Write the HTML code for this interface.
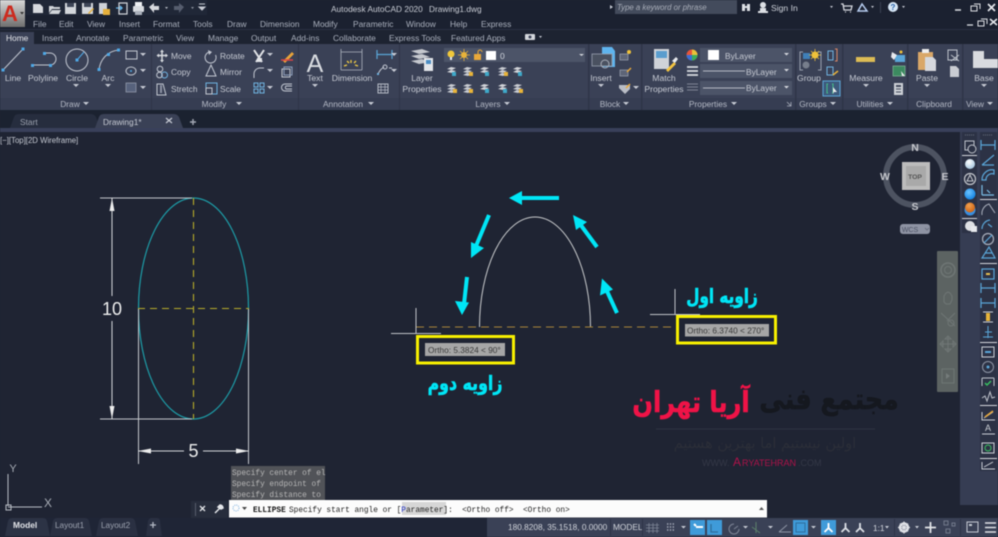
<!DOCTYPE html>
<html lang="en">
<head>
<meta charset="utf-8">
<title>AutoCAD ellipse arc</title>
<style>
html,body{margin:0;padding:0;width:998px;height:537px;overflow:hidden;background:#1f2433}
svg{display:block;filter:blur(.4px)}
text{font-family:"Liberation Sans",sans-serif}
.t{font-size:8.4px;fill:#c6cad3}
.d{font-size:8.4px;fill:#aab0bd}
.c{font-size:8.6px;fill:#c6cad3;text-anchor:middle}
.h{font-size:8.4px;fill:#b4b9c5;text-anchor:middle}
.m{font-family:"Liberation Mono",monospace;font-size:7.8px}
.fa{font-family:"DejaVu Sans",sans-serif;font-weight:bold;text-anchor:middle;direction:rtl}
.ic{fill:none;stroke:#c3c8d2;stroke-width:1}
.bl{fill:none;stroke:#6fb2e0;stroke-width:1}
.tb{fill:none;stroke:#5aa6d8;stroke-width:1.2}
</style>
</head>
<body>
<svg width="998" height="537" viewBox="0 0 998 537" xmlns="http://www.w3.org/2000/svg">
<defs>
<linearGradient id="app" x1="0" y1="0" x2="0" y2="1"><stop offset="0" stop-color="#d8d8d8"/><stop offset="1" stop-color="#6f6f6f"/></linearGradient>
<radialGradient id="sb" cx=".4" cy=".35" r=".7"><stop offset="0" stop-color="#6cc4ff"/><stop offset="1" stop-color="#0f7fe0"/></radialGradient>
<radialGradient id="so" cx=".4" cy=".3" r=".7"><stop offset="0" stop-color="#f0a050"/><stop offset="1" stop-color="#cf6414"/></radialGradient>
<radialGradient id="sw" cx=".4" cy=".3" r=".7"><stop offset="0" stop-color="#fff"/><stop offset="1" stop-color="#a8c8e0"/></radialGradient>
<g id="lay"><path d="M-5 -2l4-2 5 1-4 2zM-5 1l4-2 5 1-4 2zM-5 4l4-2 5 1-4 2z" fill="#c9ccd2"/><rect x="1" y="1" width="4" height="4" fill="#e8b43a"/></g>
<g id="lay2"><path d="M-5 -2l4-2 5 1-4 2zM-5 1l4-2 5 1-4 2z" fill="#d3d5da"/><rect x="0" y="1" width="4" height="4" fill="#3fa9c9"/></g>
<g id="arw"><path d="M-3 -1 h6 l-3 3z" fill="#c6cad3"/></g>
<g id="tic"><rect x="-6" y="-5" width="12" height="10" class="tb"/><path d="M-2 0h4" stroke="#e8c050" stroke-width="2"/></g>
<g id="tic2"><path d="M-7 -5v10M7 -5v10M-7 0H7" class="tb"/></g>
<g id="tic3"><path d="M-6 5L6 -5M-6 5h12" class="tb"/></g>
</defs>

<!-- canvas -->
<rect width="998" height="537" fill="#1f2433"/>

<!-- title bar -->
<rect width="998" height="30" fill="#1b2130"/>
<rect x="26" y="0" width="181" height="15" fill="#202737"/>
<rect x="0" y="29" width="998" height="1" fill="#2a3142"/>
<rect width="25" height="27" fill="url(#app)"/>
<text x="2" y="21" style="font-size:22px;font-weight:bold;fill:#cc2a1e">A</text>
<path d="M20 12h4l-2 2.500z" fill="#333"/>

<!-- QAT icons -->
<path d="M33 4h7l3 3v6H33z" fill="#d7dade"/>
<path d="M49 6h4l1 1h6v2H52l-3 4zM52 10h9l-2 4H49z" fill="#d1d4d9"/>
<rect x="65" y="3" width="11" height="11" fill="#d3d6db"/><rect x="67" y="3" width="7" height="4" fill="#3d4557"/>
<rect x="82" y="3" width="11" height="11" fill="#d3d6db"/><rect x="84" y="3" width="7" height="4" fill="#3d4557"/><path d="M88 13l5-5 1 1-5 5z" fill="#e5b03d"/>
<rect x="99" y="3" width="8" height="11" fill="#cfd2d7"/><rect x="103" y="9" width="7" height="6" fill="#e5b03d"/>
<path d="M116 8h6M120 6l2 2-2 2" stroke="#62b5ea" stroke-width="1.300" fill="none"/><rect x="119" y="3" width="8" height="11" fill="none" stroke="#d3d6db" stroke-width="1.200"/>
<rect x="133" y="6" width="11" height="6" rx="1" fill="#d8dbe0"/><rect x="135" y="2" width="7" height="4" fill="#eef0f3"/><rect x="135" y="11" width="7" height="4" fill="#aab0bb"/>
<path d="M149 7l5-4v3h5v4h-5v3z" fill="#d6d8dd"/><path d="M165 7h3l-1.500 2z" fill="#b8bcc5"/>
<path d="M184 7l-5-4v3h-5v4h5v3z" fill="#565d6e"/><path d="M191 7h3l-1.500 2z" fill="#8d93a0"/>
<path d="M199 4h6M199 7h6l-3 3z" stroke="#c6cad3" stroke-width="1" fill="#c6cad3"/>

<text x="331" y="12" style="font-size:8.300px;fill:#c8ccd4">Autodesk AutoCAD 2020</text>
<text x="429" y="12" style="font-size:8.300px;fill:#c8ccd4">Drawing1.dwg</text>
<path d="M610 5l3 2-3 2z" fill="#c6cad3"/>
<rect x="615" y="0" width="122" height="14" fill="#434b5c"/>
<text x="617" y="10" style="font-size:7.800px;font-style:italic;fill:#a9aeb9">Type a keyword or phrase</text>
<path d="M742 4h3v7h-3zM747 4h3v7h-3zM745 6h2v2h-2z" fill="#dcdfe4"/>
<circle cx="763" cy="5" r="3" fill="#dcdfe4"/><path d="M758 11h10v2h-10zM760 8h6v3h-6z" fill="#dcdfe4"/>
<text x="771" y="11" style="font-size:8.600px;fill:#ced2da">Sign In</text>
<path d="M830 6h3l-1.500 2z" fill="#c6cad3"/>
<path d="M841 4h2l1 6h7l1-4h-9M845 12h1M850 12h1" stroke="#d5d8de" stroke-width="1.300" fill="none"/>
<path d="M862 4l-4 7h9z" fill="none" stroke="#b7cdf0" stroke-width="1.500"/><path d="M871 6h3l-1.500 2z" fill="#c6cad3"/>
<rect x="880" y="2" width="1" height="11" fill="#3a4152"/>
<circle cx="893" cy="7" r="5" fill="#d6e6f5"/><text x="893" y="10" style="font-size:8px;font-weight:bold;fill:#2560a8;text-anchor:middle">?</text>
<path d="M902 6h3l-1.500 2z" fill="#c6cad3"/>
<path d="M955 10h6" stroke="#dcdfe4" stroke-width="1.500"/>
<path d="M971 6h6v5h-6zM974 4h6v5" fill="none" stroke="#dcdfe4" stroke-width="1"/>
<path d="M988 4l7 7M995 4l-7 7" stroke="#e8eaee" stroke-width="1.600"/>
<path d="M967 25h6" stroke="#dcdfe4" stroke-width="1.300"/>
<path d="M978 21h6v5h-6zM981 19h6v5" fill="none" stroke="#dcdfe4" stroke-width="1"/>
<path d="M990 19l7 6M997 19l-7 6" stroke="#e8eaee" stroke-width="1.500"/>

<!-- menu bar -->
<text class="d" x="33" y="27">File</text><text class="d" x="59" y="27">Edit</text><text class="d" x="87" y="27">View</text>
<text class="d" x="119" y="27">Insert</text><text class="d" x="153" y="27">Format</text><text class="d" x="193" y="27">Tools</text>
<text class="d" x="227" y="27">Draw</text><text class="d" x="260" y="27">Dimension</text><text class="d" x="313" y="27">Modify</text>
<text class="d" x="353" y="27">Parametric</text><text class="d" x="406" y="27">Window</text><text class="d" x="450" y="27">Help</text><text class="d" x="481" y="27">Express</text>

<!-- ribbon tabs -->
<rect x="0" y="30" width="998" height="14" fill="#1d2331"/>
<rect x="0" y="32" width="34" height="12" fill="#3a4156"/>
<text x="6" y="41" style="font-size:8.400px;fill:#e4e6ea">Home</text>
<text class="d" x="42" y="41">Insert</text><text class="d" x="76" y="41">Annotate</text><text class="d" x="123" y="41">Parametric</text>
<text class="d" x="176" y="41">View</text><text class="d" x="208" y="41">Manage</text><text class="d" x="251" y="41">Output</text>
<text class="d" x="291" y="41">Add-ins</text><text class="d" x="333" y="41">Collaborate</text><text class="d" x="389" y="41">Express Tools</text><text class="d" x="451" y="41">Featured Apps</text>
<rect x="525" y="34" width="10" height="6" rx="1" fill="#d3d6db"/><circle cx="530" cy="37" r="1.500" fill="#3a4156"/><path d="M539 36h3l-1.500 2z" fill="#c6cad3"/>

<!-- ribbon -->
<rect x="0" y="44" width="998" height="66" fill="#3a4156"/>
<rect x="0" y="98" width="998" height="12" fill="#363d52"/>
<g fill="#2f3548">
<rect x="151" y="44" width="1" height="66"/><rect x="298" y="44" width="1" height="66"/><rect x="399" y="44" width="1" height="66"/>
<rect x="588" y="44" width="1.500" height="66"/><rect x="641" y="44" width="1.500" height="66"/><rect x="795" y="44" width="1.500" height="66"/>
<rect x="842" y="44" width="1.500" height="66"/><rect x="907" y="44" width="1.500" height="66"/><rect x="962" y="44" width="1.500" height="66"/>
</g>

<!-- Draw panel -->
<path d="M3 70L23 49" class="ic"/><rect x="1.500" y="68.500" width="3" height="3" fill="#4ea8e6"/><rect x="21.500" y="47.500" width="3" height="3" fill="#4ea8e6"/>
<path d="M33 65h17a6 6 0 0 0 0-12h-4" class="ic"/><rect x="31" y="64" width="3" height="3" fill="#4ea8e6"/><rect x="43" y="52" width="3" height="3" fill="#4ea8e6"/><rect x="49" y="64" width="3" height="3" fill="#4ea8e6"/>
<circle cx="77" cy="60" r="11" class="ic"/><path d="M77 60l7-8" stroke="#4ea8e6" stroke-width="1"/><rect x="75.500" y="58.500" width="3" height="3" fill="#4ea8e6"/>
<path d="M99 70c1-10 8-19 20-20" class="ic"/><rect x="97.500" y="68" width="3" height="3" fill="#4ea8e6"/><rect x="107" y="53" width="3" height="3" fill="#4ea8e6"/><rect x="117" y="48.500" width="3" height="3" fill="#4ea8e6"/>
<rect x="126" y="51" width="11" height="8" class="ic"/><use href="#arw" x="143" y="54"/>
<ellipse cx="131" cy="71" rx="5" ry="4" class="ic"/><circle cx="131" cy="71" r="1" fill="#4ea8e6"/><use href="#arw" x="143" y="70"/>
<rect x="126" y="83" width="10" height="9" fill="#57627c" stroke="#9aa2b2" stroke-width=".7"/><use href="#arw" x="143" y="87"/>
<text class="c" x="13" y="81">Line</text><text class="c" x="43" y="81">Polyline</text><text class="c" x="77" y="81">Circle</text><text class="c" x="108" y="81">Arc</text>
<use href="#arw" x="76" y="85"/><use href="#arw" x="108" y="85"/>
<text class="h" x="70" y="107">Draw</text><use href="#arw" x="86" y="103"/>

<!-- Modify panel -->
<path d="M162 51v10M157.500 55.500h9" stroke="#d8dbe0" stroke-width="1.500"/><path d="M162 49.500l-2 2.500h4zM162 62.500l-2-2.500h4zM156.500 55.500l2.500-2v4zM168 55.500l-2.500-2v4z" fill="#d8dbe0"/>
<text class="t" x="171" y="59">Move</text>
<circle cx="160" cy="69" r="2.800" class="ic"/><circle cx="164.500" cy="75" r="3" class="ic" style="stroke:#6fb2e0"/><circle cx="159.500" cy="75" r="2.800" class="ic"/>
<text class="t" x="171" y="75">Copy</text>
<path d="M157 84h6l3 11h-9z" class="ic"/><rect x="160" y="85" width="2" height="8" fill="#8d94a5"/>
<text class="t" x="171" y="92">Stretch</text>
<path d="M210 52a5.500 5.500 0 1 0 5.500 3" class="ic"/><path d="M208 50l4 2-3 3z" fill="#c3c8d2"/>
<text class="t" x="220" y="59">Rotate</text>
<path d="M206 76l5-11 5 11z" class="ic"/>
<text class="t" x="220" y="75">Mirror</text>
<rect x="206" y="83" width="11" height="11" class="bl"/><rect x="206" y="88" width="6" height="6" class="ic"/>
<text class="t" x="220" y="92">Scale</text>
<path d="M254 50l8 12M264 50l-8 12" stroke="#e1e3e7" stroke-width="2"/><rect x="257" y="58" width="5" height="4" fill="#e1e3e7"/>
<use href="#arw" x="270" y="54"/>
<path d="M283 61l9-9 2 2-9 9z" fill="#e8a33a"/><path d="M281 60h12" stroke="#d44" stroke-width="1.500"/>
<path d="M254 78v-4a6 6 0 0 1 6-6h4" class="ic"/><use href="#arw" x="270" y="70"/>
<rect x="282" y="69" width="8" height="8" class="ic"/><rect x="284" y="67" width="8" height="8" class="ic" style="stroke:#8fa0bb"/>
<rect x="254" y="83" width="4" height="4" class="bl"/><rect x="260" y="83" width="4" height="4" class="bl"/><rect x="254" y="89" width="4" height="4" class="bl"/><rect x="260" y="89" width="4" height="4" class="bl"/><use href="#arw" x="270" y="87"/>
<path d="M292 84h-7a3 3 0 0 0 0 7h7M292 86h-6a2 2 0 0 0 0 3h6" class="ic"/>
<text class="h" x="214" y="107">Modify</text><use href="#arw" x="239" y="103"/>

<!-- Annotation -->
<text x="315" y="72" style="font-size:25px;fill:#d8dbe0;text-anchor:middle">A</text>
<text class="c" x="315" y="81">Text</text><use href="#arw" x="315" y="85"/>
<path d="M341 49v21M362 49v21M341 52h21M341 70h21" stroke="#aeb4c0" stroke-width=".8" fill="none"/>
<path d="M344 66l3-1M351 60v3M358 66l-3-1M347 61l2 2M356 61l-2 2" stroke="#f0cb45" stroke-width="1.300"/>
<text class="c" x="352" y="81">Dimension</text>
<path d="M377 50v9M392 50v9M377 54.500h15" class="tb"/><use href="#arw" x="394" y="54"/>
<path d="M378 74c2-4 3-5 6-7" class="ic"/><circle cx="385" cy="67" r="2" class="ic"/><rect x="377" y="73" width="2" height="2" fill="#6fb2e0"/><path d="M389 68h3" stroke="#c3c8d2"/><use href="#arw" x="394" y="70"/>
<rect x="378" y="84" width="10" height="9" fill="none" stroke="#b6bbc6"/><path d="M378 87h10M378 90h10M381 84v9M385 84v9" stroke="#b6bbc6" stroke-width=".7"/>
<text class="h" x="343" y="107">Annotation</text><use href="#arw" x="371" y="103"/>

<!-- Layers -->
<path d="M411 51l11-2 8 3-11 2zM411 56l11-2 8 3-11 2zM411 61l11-2 8 3-11 2z" fill="#c5c8ce"/>
<rect x="424" y="58" width="9" height="13" fill="#e4e6ea"/><rect x="426" y="60" width="5" height="4" fill="#4d8ec4"/>
<text class="c" x="422" y="81">Layer</text><text class="c" x="422" y="92">Properties</text>
<rect x="444" y="48" width="141" height="14" fill="#4c5468"/>
<circle cx="451" cy="54" r="3.500" fill="#f1c83a"/><rect x="450" y="57" width="2" height="3" fill="#e8eaee"/>
<circle cx="464" cy="55" r="3" fill="#e8b33a"/><path d="M464 49v12M458 55h12M460 51l8 8M468 51l-8 8" stroke="#e8b33a" stroke-width=".8"/>
<rect x="474" y="54" width="7" height="6" fill="#e8a83a"/><path d="M478 54v-2a2 2 0 0 1 4 0" stroke="#e8a83a" fill="none"/>
<rect x="486" y="51" width="10" height="9" fill="#fff"/>
<text x="500" y="59" style="font-size:8.500px;fill:#d0d4dc">0</text><path d="M579 54h5l-2.500 2z" fill="#d5d8de"/>
<use href="#lay2" x="452" y="71"/><use href="#lay" x="468" y="71"/><use href="#lay2" x="485" y="71"/><use href="#lay" x="503" y="71"/><use href="#lay2" x="518" y="71"/>
<use href="#lay" x="452" y="88"/><use href="#lay" x="468" y="88"/><use href="#lay2" x="485" y="88"/><use href="#lay2" x="503" y="88"/><use href="#lay" x="518" y="88"/>
<text class="h" x="488" y="107">Layers</text><use href="#arw" x="507" y="103"/>

<!-- Block -->
<path d="M602 47h10l3 4v16h-13z" fill="#5fb4ee"/><rect x="592" y="54" width="20" height="12" fill="#4a5160" stroke="#98a0ae" stroke-width=".8"/><circle cx="605" cy="64" r="4" fill="none" stroke="#a8aeb9"/>
<text class="c" x="601" y="81">Insert</text><use href="#arw" x="601" y="85"/>
<rect x="620" y="54" width="8" height="6" fill="#5d6477" stroke="#aab0bd" stroke-width=".6"/><circle cx="629" cy="52" r="2" fill="#f0c23a"/>
<rect x="620" y="70" width="8" height="6" fill="#5d6477" stroke="#aab0bd" stroke-width=".6"/><path d="M627 72l4-4" stroke="#e8a83a" stroke-width="1.500"/>
<path d="M619 85h11v4l-5 5-6-6z" fill="#b9bdc6"/><path d="M626 88l4-4" stroke="#e8a83a" stroke-width="1.500"/><use href="#arw" x="636" y="87"/>
<text class="h" x="610" y="107">Block</text><use href="#arw" x="626" y="103"/>

<!-- Properties -->
<rect x="654" y="49" width="15" height="20" fill="#d0d3d8"/><rect x="656" y="51" width="11" height="7" fill="#5a9dce"/><path d="M666 70l8-8 2 2-8 8z" fill="#f2c340"/><path d="M672 61l4-4 2 2-3 4z" fill="#e8eaee"/>
<text class="c" x="664" y="81">Match</text><text class="c" x="664" y="92">Properties</text>
<circle cx="692" cy="55" r="5.500" fill="#e8553a"/><path d="M692 55V49.500a5.500 5.500 0 0 1 5.500 5.500z" fill="#e8c23a"/><path d="M692 55h5.500a5.500 5.500 0 0 1-5.500 5.500z" fill="#3aaf5a"/><path d="M692 55v5.500a5.500 5.500 0 0 1-5.500-5.500z" fill="#3a6fd8"/>
<path d="M687 67h11M687 71h11M687 75h11" stroke="#d8dbe0" stroke-width="1.800"/>
<path d="M687 84h11M687 87h11M687 90h11" stroke="#7f8595" stroke-width="1"/>
<rect x="700" y="48" width="92" height="14" fill="#4c5468"/><rect x="708" y="50" width="11" height="10" fill="#fff"/>
<text class="t" x="725" y="59">ByLayer</text><path d="M784 53h5l-2.500 2.500z" fill="#d5d8de"/>
<rect x="700" y="64" width="92" height="14" fill="#4c5468"/><path d="M703 71h42" stroke="#b4b9c4" stroke-width="1"/>
<text class="t" x="746" y="75">ByLayer</text><path d="M784 69h5l-2.500 2.500z" fill="#d5d8de"/>
<rect x="700" y="81" width="92" height="14" fill="#4c5468"/><path d="M703 88h42" stroke="#b4b9c4" stroke-width="1"/>
<text class="t" x="746" y="91">ByLayer</text><path d="M784 86h5l-2.500 2.500z" fill="#d5d8de"/>
<text class="h" x="708" y="107">Properties</text><use href="#arw" x="734" y="103"/>
<path d="M787 102l4 4M791 102v4h-4" stroke="#aab0bd" stroke-width=".8" fill="none"/>

<!-- Groups -->
<path d="M803 52h-3v18h3M818 52h3v18h-3" stroke="#9aa1af" fill="none"/><rect x="803" y="53" width="7" height="6" fill="#3f7fb8"/><circle cx="806" cy="65" r="3.500" fill="#777e8c"/>
<circle cx="815" cy="55" r="3.500" fill="#f0c23a"/><path d="M815 49v12M809 55h12M811 51l8 8M819 51l-8 8" stroke="#f0c23a" stroke-width=".8"/>
<text class="c" x="809" y="81">Group</text>
<rect x="828" y="51" width="5" height="9" fill="none" stroke="#6fb2e0"/><path d="M835 49h2v12h-2" stroke="#d86" fill="none"/>
<rect x="827" y="67" width="6" height="8" fill="none" stroke="#6fb2e0"/><path d="M833 75l5-4" stroke="#e8b33a" stroke-width="1.500"/>
<rect x="823" y="81" width="17" height="15" fill="#3d5a7c" stroke="#5aa6d8"/><path d="M828 84h-1v9h1M832 84h1v9h-1" stroke="#45c08a" fill="none"/><path d="M833 87l4 5-3 0-1 2z" fill="#eee"/>
<text class="h" x="813" y="107">Groups</text><use href="#arw" x="833" y="103"/>

<!-- Utilities -->
<rect x="856" y="57" width="19" height="5" fill="#dcbc55"/>
<text class="c" x="866" y="81">Measure</text><use href="#arw" x="866" y="85"/>
<rect x="895" y="55" width="10" height="7" fill="#5aa6d8"/><path d="M892 52l5 3-3 5-3-3z" fill="#e8eaee"/><circle cx="901" cy="52" r="1.500" fill="#f0c23a"/>
<rect x="893" y="66" width="12" height="10" fill="#3c8a60" stroke="#7fb898" stroke-width=".7"/><path d="M901 71l4 5-3 0z" fill="#eee"/>
<rect x="894" y="83" width="9" height="12" fill="#ccd0d6"/><rect x="896" y="85" width="5" height="2" fill="#444b5c"/><path d="M896 89h5M896 92h5" stroke="#444b5c"/>
<text class="h" x="870" y="107">Utilities</text><use href="#arw" x="890" y="103"/>

<!-- Clipboard -->
<rect x="918" y="52" width="15" height="18" fill="#d9a768"/><rect x="922" y="49" width="7" height="4" fill="#eee"/>
<path d="M925 57h8l3 3v11h-11z" fill="#d6d8dd"/>
<text class="c" x="927" y="81">Paste</text><use href="#arw" x="927" y="85"/>
<rect x="948" y="50" width="9" height="10" fill="none" stroke="#bfc4cd"/><path d="M951 55l8 6M959 55l-8 6" stroke="#bfc4cd"/>
<path d="M950 66h6l3 3v8h-9z" fill="#c9ccd2"/>
<text class="h" x="934" y="107">Clipboard</text>

<!-- View -->
<path d="M973 51h11v8h14v9H973z" fill="#d9dbdf"/>
<text class="c" x="984" y="81">Base</text><use href="#arw" x="984" y="85"/>
<text class="h" x="975" y="107">View</text><use href="#arw" x="990" y="103"/>

<!-- file tabs -->
<rect x="0" y="110" width="998" height="18" fill="#1b2230"/>
<path d="M10 128l4-11q1-3 5-3h72q3 0 5 3l4 11z" fill="#262d3e"/>
<path d="M95 128l4-11q1-3 5-3h70q3 0 5 3l4 11z" fill="#3a4156"/>
<text class="d" x="20" y="125" style="fill:#9da3b0">Start</text>
<text class="t" x="103" y="125">Drawing1*</text>
<path d="M166 118l6 5M172 118l-6 5" stroke="#c6cad3" stroke-width="1.200"/>
<path d="M193 119v6M190 122h6" stroke="#a4a9b5" stroke-width="1.400"/>
<rect x="0" y="128" width="998" height="4" fill="#39405a"/>

<!-- viewport label -->
<text x="0" y="143" style="font-size:7.800px;fill:#c6cad3">[−][Top][2D Wireframe]</text>

<!-- ellipse drawing -->
<ellipse cx="193.500" cy="308.500" rx="55" ry="110.500" fill="none" stroke="#1d9ba6" stroke-width="1.200"/>
<path d="M193.500 198V419" stroke="#b8ad2a" stroke-width="1.100" stroke-dasharray="7 5"/>
<path d="M138 308.500H249" stroke="#b8ad2a" stroke-width="1" stroke-dasharray="7 5"/>
<path d="M100 198h92M100 419h92" stroke="#c4c7cc" stroke-width="1"/>
<path d="M112 198v98M112 321v98" stroke="#d4d6da" stroke-width="1"/>
<path d="M112 198l-2.500 13h5zM112 419l-2.500-13h5z" fill="#eceded"/>
<text x="112" y="315" style="font-size:18px;fill:#eceded;text-anchor:middle">10</text>
<path d="M138.500 309v155M248.500 309v155" stroke="#c4c7cc" stroke-width="1"/>
<path d="M138 451h46M203 451h46" stroke="#d4d6da" stroke-width="1"/>
<path d="M138 451l13-2.500v5zM249 451l-13-2.500v5z" fill="#eceded"/>
<text x="193.500" y="457" style="font-size:18px;fill:#eceded;text-anchor:middle">5</text>

<!-- arc -->
<path d="M479.500 327A55.500 110 0 0 1 590.500 327" fill="none" stroke="#c8cacc" stroke-width="1"/>
<path d="M416 327H676" stroke="#a8853a" stroke-width="1" stroke-dasharray="8 5"/>
<path d="M416 308v26M391 333.500h50M675 289v26M650 314.500h50" stroke="#c0c3c8" stroke-width="1" fill="none"/>
<!-- cyan arrows -->
<g stroke="#00e6f6" stroke-width="4" fill="#00e6f6">
<path d="M559 198H518"/><path d="M509 198l13-7v14z" stroke="none"/>
<path d="M489 215L476 246"/><path d="M471 258l0-16 13 6z" stroke="none"/>
<path d="M467 277L464 304"/><path d="M462 315l-7-14 14 1.500z" stroke="none"/>
<path d="M597 247L580 224"/><path d="M573 215l14 7-11 8z" stroke="none"/>
<path d="M617 313L606 289"/><path d="M602 278.500l11 11-13 6z" stroke="none"/>
</g>
<!-- yellow boxes -->
<rect x="417.500" y="336.500" width="96" height="26.500" fill="none" stroke="#f8f000" stroke-width="3"/>
<rect x="425" y="343" width="80" height="13" fill="#a6a6a6"/>
<text x="428" y="353" style="font-size:8.300px;fill:#3a3a3a">Ortho: 5.3824 &lt; 90°</text>
<rect x="677.500" y="316.500" width="98" height="26.500" fill="none" stroke="#f8f000" stroke-width="3"/>
<rect x="685" y="324" width="84" height="12.500" fill="#a6a6a6"/>
<text x="687" y="333.500" style="font-size:8.300px;fill:#3a3a3a">Ortho: 6.3740 &lt; 270°</text>
<!-- farsi labels -->
<text class="fa" transform="translate(722 303) scale(.76 1)" style="font-size:20px;fill:#00e6f6;stroke:#00e6f6;stroke-width:.6px">زاویه اول</text>
<text class="fa" transform="translate(465 390) scale(.79 1)" style="font-size:20px;fill:#00e6f6;stroke:#00e6f6;stroke-width:.6px">زاویه دوم</text>

<!-- watermark -->
<text class="fa" transform="translate(829 409) scale(.87 1)" style="font-size:29px;fill:#15181f;stroke:#15181f;stroke-width:.6px">مجتمع فنی</text>
<text class="fa" transform="translate(691 412) scale(.83 1)" style="font-size:29px;fill:#ef1347;stroke:#ef1347;stroke-width:.6px">آریا تهران</text>
<rect x="656" y="428.500" width="219" height="1" fill="#2f3441"/>
<text class="fa" x="765" y="448" style="font-size:14.500px;font-weight:normal;fill:#2b2e38">اولین نیستیم اما بهترین هستیم</text>
<text x="702" y="466" style="font-size:9px;fill:#343847">WWW.</text>
<text x="733" y="466" style="font-size:12px;fill:#ad1249">A</text><text x="742" y="466" style="font-size:9px;fill:#ad1249">RYATEHRAN</text>
<text x="798" y="466" style="font-size:9px;fill:#343847">.COM</text>

<!-- right side toolbars -->
<rect x="960" y="132" width="38" height="373" fill="#363d53"/>
<rect x="962" y="132" width="15" height="101" fill="#2c3245"/>
<rect x="980" y="132" width="17" height="339" fill="#2c3245"/>
<path d="M965 135h10M983 135h10" stroke="#666d80" stroke-dasharray="1 1"/>
<rect x="965" y="141" width="9" height="9" fill="none" stroke="#c0c4cc"/><circle cx="972" cy="149" r="4" fill="#2c3245" stroke="#c0c4cc"/>
<rect x="962" y="155" width="15" height="1" fill="#d6d8dd"/>
<circle cx="970" cy="164" r="5" fill="url(#sw)"/>
<circle cx="970" cy="179" r="5.500" fill="none" stroke="#c4c7cd" stroke-width="1.200"/><path d="M970 175l-3 6h6z" fill="none" stroke="#c4c7cd"/>
<circle cx="970" cy="194" r="5.500" fill="url(#sb)"/>
<circle cx="970" cy="210" r="5.500" fill="#3a8fe0"/><circle cx="970" cy="207.500" r="5" fill="url(#so)"/>
<rect x="962" y="218" width="15" height="1" fill="#d6d8dd"/>
<circle cx="970" cy="226" r="5" fill="#dfe1e5"/><rect x="971" y="226" width="6" height="6" fill="#e8eaee"/>
<use href="#tic2" x="988" y="145"/><use href="#tic3" x="988" y="160"/>
<path d="M982 180a10 10 0 0 1 12-10v4a6 6 0 0 0-8 6z" class="tb"/>
<path d="M982 195h12M982 185v10M987 190l3 3" class="tb" style="stroke:#7bbfe8"/>
<rect x="980" y="199" width="17" height="1" fill="#d6d8dd"/>
<path d="M982 215a10 10 0 0 1 7-11l6 9" class="ic" style="stroke:#aab0bd"/>
<path d="M982 229a9 9 0 0 1 8-9M988 224l4 3" class="tb"/>
<circle cx="988" cy="239" r="5.500" class="tb" style="stroke:#aab0bd"/><path d="M984 243l8-8" class="tb"/>
<path d="M982 258h13l-6-11zM985 253h7" class="tb"/>
<rect x="980" y="263" width="17" height="1" fill="#d6d8dd"/>
<use href="#tic" x="988" y="274"/><use href="#tic2" x="988" y="288"/><use href="#tic2" x="988" y="303"/>
<path d="M983 312h10M983 322h10" stroke="#ccd0d6"/><rect x="986" y="313" width="4" height="8" fill="#e8b43a"/>
<path d="M988 326v12M983 337h10M985 332h7" stroke="#5aa6d8"/>
<rect x="980" y="342" width="17" height="1" fill="#d6d8dd"/>
<rect x="982" y="347" width="12" height="10" fill="#2c3245" stroke="#ccd0d6"/><path d="M985 352h6" stroke="#5aa6d8" stroke-width="2"/>
<circle cx="988" cy="367" r="5.500" fill="none" stroke="#8f96a6"/><circle cx="988" cy="367" r="1.500" fill="#5aa6d8"/>
<path d="M982 378h12M982 378v8M994 378v8" stroke="#c0c4cc" fill="none"/><path d="M985 383l2 2 4-4" stroke="#38c060" stroke-width="1.500" fill="none"/>
<path d="M982 398l3-2 2 5 3-9 2 6 3-1" stroke="#c0c4cc" fill="none"/>
<rect x="980" y="405" width="17" height="1" fill="#d6d8dd"/>
<path d="M982 412v8h13M984 418l9-6" stroke="#ccd0d6" fill="none"/><path d="M985 417l8-6" stroke="#e8a83a" stroke-width="1.500"/>
<text x="988" y="431" style="font-size:9px;fill:#ccd0d6;text-anchor:middle">A</text><path d="M982 434h13" stroke="#ccd0d6"/>
<rect x="982" y="443" width="12" height="10" fill="none" stroke="#ccd0d6"/><circle cx="988" cy="448" r="3" fill="none" stroke="#38c060"/>
<rect x="980" y="458" width="17" height="1" fill="#d6d8dd"/>
<path d="M982 462v7h13M984 467l9-5" stroke="#ccd0d6" fill="none"/>

<!-- view cube -->
<circle cx="915" cy="176" r="29" fill="none" stroke="#4d5361" stroke-width="6"/>
<rect x="902" y="162" width="28" height="28" fill="#bcbcbc"/>
<rect x="906" y="166" width="20" height="20" fill="#a9a9a9"/>
<text x="915" y="179" style="font-size:6.800px;font-weight:bold;fill:#555;text-anchor:middle">TOP</text>
<g style="font-size:10.500px;font-weight:bold;fill:#c6c8cd;text-anchor:middle">
<text x="915" y="151">N</text><text x="915" y="210">S</text><text x="885" y="180">W</text><text x="945" y="180">E</text>
</g>
<rect x="900" y="224" width="30" height="10" rx="3" fill="#8e93a3"/>
<text x="910" y="232" style="font-size:7px;fill:#4c5264;text-anchor:middle">WCS</text>
<path d="M925 228l2 2 2-2" stroke="#6d7282" fill="none"/>

<!-- nav bar -->
<rect x="937" y="251" width="21" height="141" rx="1" fill="#5c6362"/>
<circle cx="948" cy="270" r="7" fill="none" stroke="#6f7675" stroke-width="1.500"/><circle cx="948" cy="270" r="3.500" fill="none" stroke="#6f7675"/>
<path d="M944 302v-6l2-3 2-1 2 1 2 3v4l-2 4h-4z" fill="none" stroke="#6f7675"/>
<path d="M941 313l14 13M955 313l-8 8" stroke="#6f7675" fill="none"/><circle cx="951" cy="323" r="3" fill="none" stroke="#6f7675"/>
<path d="M948 336v16M940 344h16M948 336l-3 3h6zM940 344l3-3v6zM956 344l-3-3v6zM948 352l-3-3h6z" stroke="#6f7675" fill="none"/>
<rect x="942" y="369" width="12" height="14" fill="none" stroke="#6f7675"/><path d="M946 373l4 3-4 3z" fill="#757c7b"/>

<!-- command history -->
<rect x="231" y="466" width="94" height="34" fill="#515358"/>
<text class="m" x="232" y="475" fill="#b6b6b6">Specify center of el</text>
<text class="m" x="232" y="486" fill="#b6b6b6">Specify endpoint of</text>
<text class="m" x="232" y="497" fill="#b6b6b6">Specify distance to</text>

<!-- command line -->
<rect x="191" y="501" width="37" height="17" fill="#272d3c"/>
<rect x="195" y="503" width="1" height="13" fill="#575d6c"/>
<path d="M200 506l5 5M205 506l-5 5" stroke="#e4e6ea" stroke-width="1.300"/>
<path d="M215 513l5-5M220 505a3 3 0 0 1 3 3l-2 1-3-2z" stroke="#e4e6ea" stroke-width="1.500" fill="#e4e6ea"/>
<rect x="229" y="500" width="538" height="17.500" fill="#fcfcfc"/>
<circle cx="236" cy="508" r="3" fill="none" stroke="#7fb2e0" stroke-dasharray="1 1"/><path d="M242 507h5l-2.500 3z" fill="#444"/>
<rect x="402" y="502" width="44" height="13" fill="#d6d6d6"/>
<text class="m" x="253" y="512" style="font-weight:bold;fill:#111">ELLIPSE</text>
<text class="m" x="289" y="512" fill="#222" xml:space="preserve">Specify start angle or [<tspan fill="#2030c0">P</tspan>arameter]:  &lt;Ortho off&gt;  &lt;Ortho on&gt;</text>
<path d="M759 510h5l-2.500-3z" fill="#555"/>

<!-- UCS -->
<path d="M8 474v32M8 507h34" stroke="#b8bcc4" stroke-width="1" fill="none"/>
<rect x="6" y="505" width="5" height="5" fill="none" stroke="#b8bcc4"/>
<text x="13" y="472" style="font-size:11px;fill:#a8adb6;text-anchor:middle">Y</text>
<text x="48" y="507" style="font-size:12px;fill:#a8adb6;text-anchor:middle">X</text>

<!-- bottom -->
<rect x="0" y="518" width="998" height="19" fill="#1f2536"/>
<path d="M5 536l3-15q1-3 4-3h31q3 0 4 3l3 15z" fill="#2c3345"/>
<path d="M50 536l3-15q1-3 4-3h28q3 0 4 3l3 15z" fill="#2a3042"/>
<path d="M96 536l3-15q1-3 4-3h28q3 0 4 3l3 15z" fill="#2a3042"/>
<path d="M146 536l2-15q1-3 3-3h6q3 0 3 3l2 15z" fill="#2a3042"/>
<text x="13" y="528" style="font-size:8.400px;font-weight:bold;fill:#e2e4e8">Model</text>
<text x="55" y="528" style="font-size:8.200px;fill:#9da3b0">Layout1</text>
<text x="101" y="528" style="font-size:8.200px;fill:#9da3b0">Layout2</text>
<path d="M150 525h6M153 522v6" stroke="#b4b9c4" stroke-width="1.300"/>
<rect x="487" y="518" width="511" height="19" fill="#3a4156"/>
<text x="508" y="530" style="font-size:8.300px;fill:#d2d5dc">180.8208, 35.1518, 0.0000</text>
<rect x="610" y="519" width="1" height="17" fill="#2d3346"/>
<text x="613" y="530" style="font-size:8.300px;fill:#d2d5dc">MODEL</text>
<rect x="642" y="519" width="1" height="17" fill="#2d3346"/>
<path d="M649 523v10M653 523v10M657 523v10M646 525h13M646 528h13M646 531h13" stroke="#7e8596" stroke-width=".8"/>
<path d="M667 524h8M667 527h8M667 530h8" stroke="#a5abb8" stroke-width="1.400" stroke-dasharray="1.400 1.400"/>
<path d="M681 526h5l-2.500 2.500z" fill="#c6cad3"/>
<rect x="690" y="520" width="15" height="15" fill="#3f9bd9"/><path d="M694 524l2 2M696 527h7" stroke="#fff" stroke-width="2"/>
<rect x="707" y="520" width="15" height="15" fill="#3f9bd9"/><path d="M711 524v8h7" stroke="#2e6e9c" stroke-width="1.300" fill="none"/>
<path d="M734 524a5 5 0 1 0 5 5M734 529l4-3" stroke="#7e8596" fill="none"/><path d="M743 526h5l-2.500 2.500z" fill="#c6cad3"/>
<path d="M756 522v11M752 527l8 6" stroke="#5c7f6a" stroke-width="1"/><path d="M768 526h5l-2.500 2.500z" fill="#c6cad3"/>
<path d="M779 532l8-7M779 532h12" stroke="#8d94a4" fill="none"/>
<rect x="793" y="520" width="15" height="15" fill="#3f9bd9"/><rect x="796" y="523" width="9" height="9" fill="none" stroke="#2e6e9c"/>
<path d="M811 526h5l-2.500 2.500z" fill="#c6cad3"/>
<rect x="821" y="520" width="15" height="15" fill="#3f9bd9"/><path d="M828.500 523v5l-4 4M828.500 528l4 4" stroke="#fff" stroke-width="1.800" fill="none"/>
<path d="M845.500 523v5l-4 4M845.500 528l4 4" stroke="#dde0e6" stroke-width="1.800" fill="none"/>
<path d="M860 523v5l-4 4M860 528l4 4" stroke="#dde0e6" stroke-width="1.800" fill="none"/>
<text x="873" y="531" style="font-size:8.300px;fill:#d2d5dc">1:1</text><path d="M885 526h4l-2 2.500z" fill="#c6cad3"/>
<rect x="894" y="519" width="1" height="17" fill="#2d3346"/>
<circle cx="904" cy="527.500" r="4" fill="none" stroke="#dfe1e6" stroke-width="2.500"/><path d="M904 521.500v12M898 527.500h12M900 523.500l8 8M908 523.500l-8 8" stroke="#dfe1e6" stroke-width="1.200"/>
<path d="M915 526h4l-2 2.500z" fill="#c6cad3"/>
<path d="M925 527.500h11M930.500 522v11" stroke="#e2e4e8" stroke-width="1.800"/>
<rect x="944" y="521" width="4" height="4" fill="none" stroke="#717889"/><rect x="952" y="523" width="3" height="3" fill="none" stroke="#717889"/><rect x="946" y="529" width="4" height="4" fill="none" stroke="#717889"/>
<rect x="960" y="519" width="1" height="17" fill="#2d3346"/>
<rect x="967" y="522" width="11" height="10" fill="none" stroke="#c6cad3"/><rect x="969" y="524" width="3" height="2" fill="#c6cad3"/>
<path d="M985 523h11M985 527.500h11M985 532h11" stroke="#dfe1e6" stroke-width="1.500"/>
</svg>
</body>
</html>
